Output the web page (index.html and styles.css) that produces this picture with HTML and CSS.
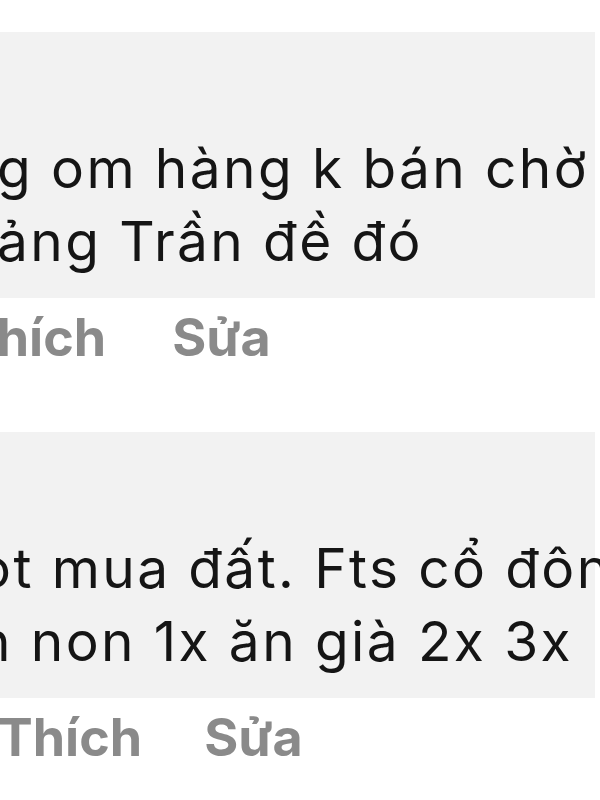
FILE: index.html
```html
<!DOCTYPE html>
<html lang="vi">
<head>
    <meta charset="UTF-8">
    <meta name="viewport" content="width=device-width, initial-scale=1.0">
    <title>Bình luận</title>
    <link rel="stylesheet" href="styles.css">
</head>
<body>
    <div class="thread">
        <!-- Comment 1 -->
        <div class="comment first">
            <div class="bubble">
                <p class="text">g om hàng k bán chờ<br>ảng Trần đề đó</p>
            </div>
            <div class="actions">
                <span class="act">Thích</span>
                <span class="act">Sửa</span>
            </div>
        </div>

        <!-- Comment 2 -->
        <div class="comment second">
            <div class="bubble">
                <p class="text">ot mua đất. Fts cổ đông<br>n non 1x ăn già 2x 3x</p>
            </div>
            <div class="actions">
                <span class="act">Thích</span>
                <span class="act">Sửa</span>
            </div>
        </div>
    </div>
</body>
</html>
```

FILE: styles.css
```css
body {
    font-family: Inter, "Noto Sans", sans-serif;
    font-feature-settings: "calt" 0;
    background: #fff;
    margin: 0;
    padding: 0;
    overflow: hidden;
}
.thread {
    padding-top: 32px;
}
.comment {
    margin-bottom: 63px;
}
.bubble {
    background: #f2f2f2;
    margin-right: 5px;
    padding: 100px 0 20px 0;
    white-space: nowrap;
}
.text {
    margin: 0;
    font-size: 55px;
    letter-spacing: 2.4px;
    line-height: 73px;
    color: #151515;
}
.first .text {
    margin-left: -3px;
}
.second .text {
    margin-left: -22px;
}
.actions {
    display: flex;
    gap: 62px;
    margin-top: 9px;
    font-size: 52px;
    font-weight: 700;
    line-height: 62px;
    color: #8a8a8a;
    white-space: nowrap;
}
.first .actions {
    margin-left: -38px;
    gap: 66px;
}
.second .actions {
    margin-left: -2px;
}
```
